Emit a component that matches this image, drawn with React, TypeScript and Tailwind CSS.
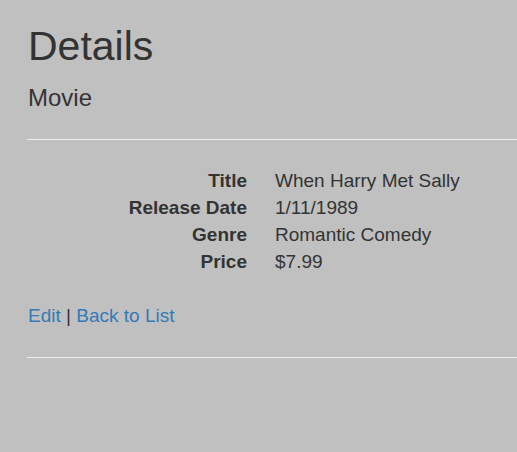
const rows = [
  ['Title', 'When Harry Met Sally'],
  ['Release Date', '1/11/1989'],
  ['Genre', 'Romantic Comedy'],
  ['Price', '$7.99'],
];

export default function App() {
  return (
    <div className="min-h-screen bg-[#c0c0c0] pl-[28px] pt-[24px] text-[#333] font-['Liberation_Sans',Arial,sans-serif]">
      <h2 className="text-[41px] leading-[1.1]">Details</h2>

      <div>
        <h4 className="mt-[16px] text-[24px] leading-[1.1]">Movie</h4>
        <hr className="mt-[28px] -ml-px border-t border-[#eee]" />

        <dl className="mt-[27px] text-[19px] leading-[27px]">
          {rows.map(([label, value]) => (
            <div key={label} className="flex">
              <dt className="w-[219px] shrink-0 text-right font-bold">{label}</dt>
              <dd className="ml-[28px]">{value}</dd>
            </div>
          ))}
        </dl>
      </div>

      <p className="mt-[27px] text-[19px] leading-[27px]">
        <a href="#" className="text-[#337ab7]">Edit</a> |{' '}
        <a href="#" className="text-[#337ab7]">Back to List</a>
      </p>
      <hr className="mt-[28px] -ml-px border-t border-[#eee]" />
    </div>
  );
}
